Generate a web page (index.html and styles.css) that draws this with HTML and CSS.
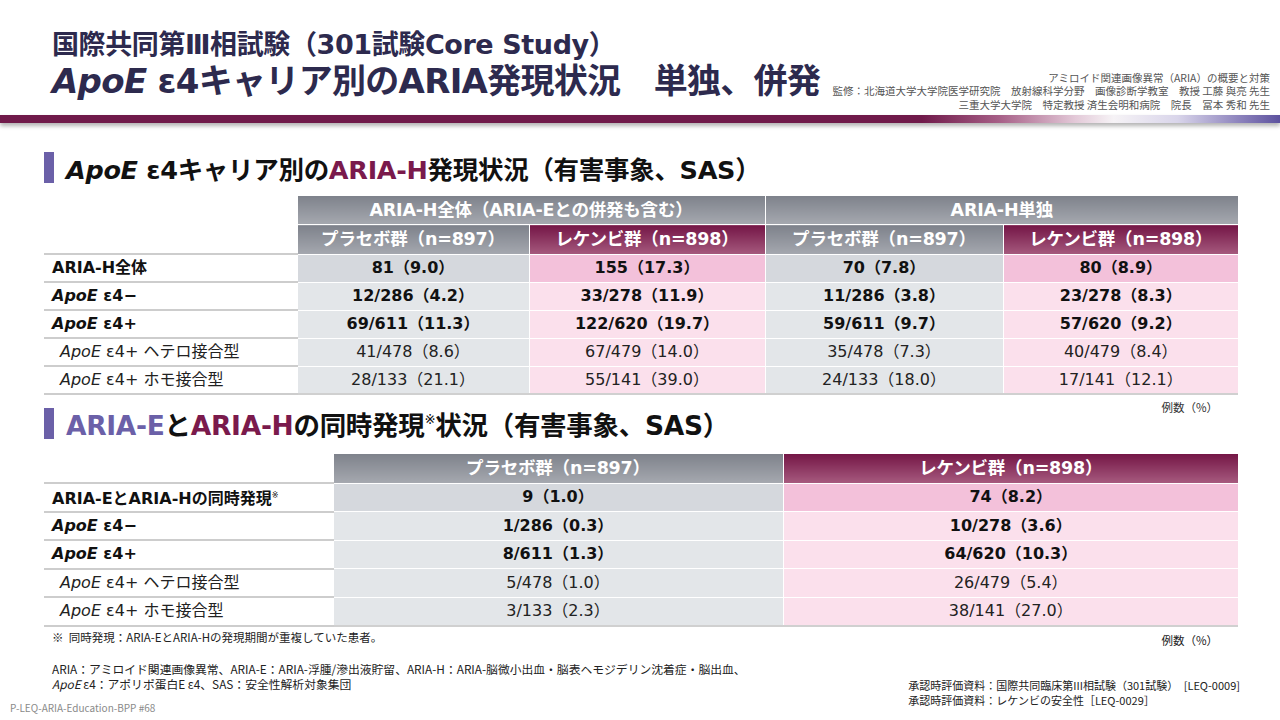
FILE: index.html
```html
<!DOCTYPE html>
<html lang="ja">
<head>
<meta charset="utf-8">
<title>ApoE ε4キャリア別のARIA発現状況</title>
<link rel="stylesheet" href="styles.css">
</head>
<body>
<div class="slide">
  <header class="header">
    <div class="titles">
      <div class="title1">国際共同第Ⅲ相試験（301試験Core Study）</div>
      <div class="title2"><i>ApoE</i> ε4キャリア別のARIA発現状況　単独、併発</div>
    </div>
    <div class="credits">
      <div>アミロイド関連画像異常（ARIA）の概要と対策</div>
      <div>監修：北海道大学大学院医学研究院　放射線科学分野　画像診断学教室　教授 工藤 與亮 先生</div>
      <div>三重大学大学院　特定教授 済生会明和病院　院長　冨本 秀和 先生</div>
    </div>
  </header>
  <div class="bar"></div>

  <main class="main">
    <h2 class="sec-title"><span class="mark"></span><span><i>ApoE</i> ε4キャリア別の<span class="maroon">ARIA-H</span>発現状況（有害事象、SAS）</span></h2>
    <table class="tbl t1">
      <colgroup>
        <col class="c-label1"><col class="c-a"><col class="c-b"><col class="c-c"><col class="c-d">
      </colgroup>
      <thead>
        <tr>
          <th class="blank"></th>
          <th class="gh" colspan="2">ARIA-H全体（ARIA-Eとの併発も含む）</th>
          <th class="gh" colspan="2">ARIA-H単独</th>
        </tr>
        <tr>
          <th class="blank"></th>
          <th class="gh">プラセボ群（n=897）</th>
          <th class="mh">レケンビ群（n=898）</th>
          <th class="gh">プラセボ群（n=897）</th>
          <th class="mh">レケンビ群（n=898）</th>
        </tr>
      </thead>
      <tbody>
        <tr class="b top">
          <td class="lab">ARIA-H全体</td>
          <td class="pl">81（9.0）</td><td class="le">155（17.3）</td>
          <td class="pl">70（7.8）</td><td class="le">80（8.9）</td>
        </tr>
        <tr class="b">
          <td class="lab"><i>ApoE</i> ε4−</td>
          <td class="pl">12/286（4.2）</td><td class="le">33/278（11.9）</td>
          <td class="pl">11/286（3.8）</td><td class="le">23/278（8.3）</td>
        </tr>
        <tr class="b">
          <td class="lab"><i>ApoE</i> ε4+</td>
          <td class="pl">69/611（11.3）</td><td class="le">122/620（19.7）</td>
          <td class="pl">59/611（9.7）</td><td class="le">57/620（9.2）</td>
        </tr>
        <tr class="n">
          <td class="lab sub"><i>ApoE</i> ε4+ ヘテロ接合型</td>
          <td class="pl">41/478（8.6）</td><td class="le">67/479（14.0）</td>
          <td class="pl">35/478（7.3）</td><td class="le">40/479（8.4）</td>
        </tr>
        <tr class="n">
          <td class="lab sub"><i>ApoE</i> ε4+ ホモ接合型</td>
          <td class="pl">28/133（21.1）</td><td class="le">55/141（39.0）</td>
          <td class="pl">24/133（18.0）</td><td class="le">17/141（12.1）</td>
        </tr>
      </tbody>
    </table>
    <div class="unit">例数（%）</div>

    <h2 class="sec-title s2"><span class="mark"></span><span><span class="purple">ARIA-E</span>と<span class="maroon">ARIA-H</span>の同時発現<sup>※</sup>状況（有害事象、SAS）</span></h2>
    <table class="tbl t2">
      <colgroup>
        <col class="c-label2"><col class="c-e"><col class="c-f">
      </colgroup>
      <thead>
        <tr>
          <th class="blank"></th>
          <th class="gh">プラセボ群（n=897）</th>
          <th class="mh">レケンビ群（n=898）</th>
        </tr>
      </thead>
      <tbody>
        <tr class="b top">
          <td class="lab">ARIA-EとARIA-Hの同時発現<sup>※</sup></td>
          <td class="pl">9（1.0）</td><td class="le">74（8.2）</td>
        </tr>
        <tr class="b">
          <td class="lab"><i>ApoE</i> ε4−</td>
          <td class="pl">1/286（0.3）</td><td class="le">10/278（3.6）</td>
        </tr>
        <tr class="b">
          <td class="lab"><i>ApoE</i> ε4+</td>
          <td class="pl">8/611（1.3）</td><td class="le">64/620（10.3）</td>
        </tr>
        <tr class="n">
          <td class="lab sub"><i>ApoE</i> ε4+ ヘテロ接合型</td>
          <td class="pl">5/478（1.0）</td><td class="le">26/479（5.4）</td>
        </tr>
        <tr class="n">
          <td class="lab sub"><i>ApoE</i> ε4+ ホモ接合型</td>
          <td class="pl">3/133（2.3）</td><td class="le">38/141（27.0）</td>
        </tr>
      </tbody>
    </table>
    <div class="note-row">
      <div class="fn">※&nbsp;&nbsp;同時発現：ARIA-EとARIA-Hの発現期間が重複していた患者。</div>
      <div class="unit2">例数（%）</div>
    </div>
  </main>

  <footer class="footer">
    <div class="f-left">
      <div class="abbr">
        <div>ARIA：アミロイド関連画像異常、ARIA-E：ARIA-浮腫/滲出液貯留、ARIA-H：ARIA-脳微小出血・脳表ヘモジデリン沈着症・脳出血、</div>
        <div><i>ApoE</i> ε4：アポリポ蛋白E ε4、SAS：安全性解析対象集団</div>
      </div>
      <div class="code">P-LEQ-ARIA-Education-BPP #68</div>
    </div>
    <div class="refs">
      <div>承認時評価資料：国際共同臨床第III相試験（301試験）　[LEQ-0009]</div>
      <div>承認時評価資料：レケンビの安全性［LEQ-0029］</div>
    </div>
  </footer>
</div>
</body>
</html>
```

FILE: styles.css
```css
html, body {
  margin: 0;
  padding: 0;
  background: #ffffff;
}
.slide {
  width: 1280px;
  height: 720px;
  overflow: hidden;
  position: relative;
  font-family: "DejaVu Sans", "Noto Sans CJK JP", sans-serif;
  color: #111111;
}
.header {
  height: 115px;
  box-sizing: border-box;
  padding: 30px 10px 4px 52px;
  display: flex;
  justify-content: space-between;
  align-items: flex-end;
}
.titles {
  align-self: flex-start;
  color: #2d2a4e;
  font-weight: bold;
  white-space: nowrap;
}
.title1 {
  font-size: 27px;
  line-height: 30px;
  letter-spacing: -0.4px;
}
.title2 {
  font-size: 34px;
  line-height: 42px;
  letter-spacing: -0.7px;
}
.credits {
  font-family: "Noto Sans CJK JP", sans-serif;
  font-size: 10.5px;
  line-height: 13.5px;
  color: #555555;
  text-align: right;
  white-space: nowrap;
}
.bar {
  height: 8px;
  background: linear-gradient(to right, #701a4a 0%, #701a4a 72%, #a65e86 78%, #e3c9d8 84%, #f6f3f6 87%, #d9d5ea 92%, #8a80bb 97%, #5d529e 100%);
  box-shadow: 0 3px 4px rgba(0, 0, 0, 0.3);
}
.main {
  padding: 0 42px 0 44px;
}
.sec-title {
  margin: 29px 0 0 0;
  height: 31px;
  display: flex;
  align-items: center;
  gap: 12px;
  font-size: 25.5px;
  font-weight: bold;
  color: #111111;
  white-space: nowrap;
  letter-spacing: -0.3px;
}
.sec-title.s2 {
  margin-top: -6px;
  font-size: 26.5px;
}
.mark {
  width: 10px;
  height: 31px;
  background: #6b60a8;
  flex: none;
}
.maroon { color: #7a1a4c; }
.purple { color: #6b60a8; }
.sec-title sup, .lab sup {
  font-size: 0.5em;
  vertical-align: 0.8em;
  font-weight: normal;
}
.tbl {
  border-collapse: collapse;
  table-layout: fixed;
  width: 1194px;
  margin-top: 13px;
}
.t2 {
  margin-top: 15px;
}
.c-label1 { width: 253px; }
.c-a { width: 232px; }
.c-b { width: 236px; }
.c-c { width: 238px; }
.c-d { width: 235px; }
.c-label2 { width: 289px; }
.c-e { width: 450px; }
.c-f { width: 455px; }
.tbl th, .tbl td {
  padding: 0;
  text-align: center;
  white-space: nowrap;
  border-left: 1px solid #ffffff;
  border-bottom: 1px solid #ffffff;
  line-height: 20px;
}
.tbl th {
  height: 28px;
  color: #ffffff;
  font-size: 17.5px;
  font-weight: bold;
  letter-spacing: -0.2px;
}
.tbl td {
  height: 26px;
  font-size: 16px;
}
.t2 td {
  height: 26.5px;
}
.tbl th.blank {
  background: #ffffff;
  border-left: none;
}
.tbl th.gh {
  background: linear-gradient(to bottom, #7e828b, #a5a8af);
}
.tbl th.mh {
  background: linear-gradient(to bottom, #741646, #a65a7e);
}
.tbl tr.b td { font-weight: bold; }
.tbl tr.n td { font-weight: normal; color: #222222; }
.tbl td.lab {
  text-align: left;
  padding-left: 8px;
  border-left: none;
  border-bottom: 2px solid #cdcdcd;
}
.tbl tr.top td.lab {
  border-top: 2px solid #cdcdcd;
}
.tbl td.lab.sub {
  padding-left: 16px;
}
.tbl td.pl { background: #e3e6e9; }
.tbl td.le { background: #fbe0ec; }
.tbl tr.top td.pl { background: #d5d8dd; }
.tbl tr.top td.le { background: #f3c1da; }
.tbl tr:last-child td.pl,
.tbl tr:last-child td.le {
  border-bottom: 2px solid #d0d0d0;
}
.unit {
  height: 13px;
  margin-top: 6px;
  padding-right: 20px;
  text-align: right;
  font-family: "Noto Sans CJK JP", sans-serif;
  font-size: 11.5px;
  line-height: 13px;
  color: #333333;
}
.note-row {
  display: flex;
  justify-content: space-between;
  margin-top: 3px;
  padding-left: 8px;
  padding-right: 20px;
  font-family: "Noto Sans CJK JP", sans-serif;
  font-size: 11.5px;
  line-height: 14px;
  color: #222222;
}
.unit2 {
  margin-top: 3px;
}
.footer {
  display: flex;
  justify-content: space-between;
  padding: 14px 40px 0 10px;
  font-family: "Noto Sans CJK JP", sans-serif;
  font-size: 11.8px;
  color: #222222;
}
.abbr {
  padding-left: 42px;
  line-height: 15px;
  white-space: nowrap;
}
.code {
  margin-top: 10px;
  font-size: 10px;
  line-height: 13px;
  color: #8a8a8a;
}
.refs {
  padding-top: 17px;
  font-size: 11px;
  line-height: 15px;
  white-space: nowrap;
}
```
